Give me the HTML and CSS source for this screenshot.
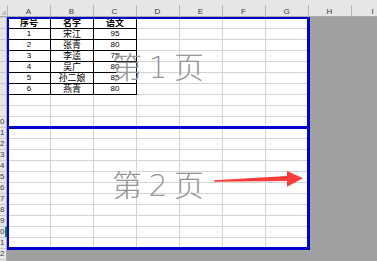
FILE: index.html
```html
<!DOCTYPE html>
<html lang="zh">
<head>
<meta charset="utf-8">
<title>分页预览</title>
<link rel="stylesheet" href="styles.css">
</head>
<body>
<div class="app">
  <div class="colhead">
    <div class="corner"><svg width="5" height="5" viewBox="0 0 5 5"><polygon points="5,0 5,5 0,5" fill="#bdbdbd"/></svg></div>
    <div class="ch">A</div>
    <div class="ch">B</div>
    <div class="ch">C</div>
    <div class="ch">D</div>
    <div class="ch">E</div>
    <div class="ch">F</div>
    <div class="ch">G</div>
    <div class="ch">H</div>
    <div class="ch">I</div>
  </div>
  <div class="main">
    <div class="rowhead">
      <div class="rh"></div>
      <div class="rh"></div>
      <div class="rh"></div>
      <div class="rh"></div>
      <div class="rh"></div>
      <div class="rh"></div>
      <div class="rh"></div>
      <div class="rh"></div>
      <div class="rh"></div>
      <div class="rh"><span>10</span></div>
      <div class="rh"><span>11</span></div>
      <div class="rh"><span>12</span></div>
      <div class="rh"><span>13</span></div>
      <div class="rh"><span>14</span></div>
      <div class="rh"><span>15</span></div>
      <div class="rh"><span>16</span></div>
      <div class="rh"><span>17</span></div>
      <div class="rh"><span>18</span></div>
      <div class="rh"><span>19</span></div>
      <div class="rh active"><span>20</span></div>
      <div class="rh"><span>21</span></div>
      <div class="rh"><span>22</span></div>
      <div class="rh"><span>23</span></div>
    </div>
    <div class="cells">
      <div class="print">
        <div class="table">
          <div class="zh h">序号</div><div class="zh h">名字</div><div class="zh h">语文</div>
          <div>1</div><div class="zh">宋江</div><div>95</div>
          <div>2</div><div class="zh">张青</div><div>80</div>
          <div>3</div><div class="zh">李逵</div><div>75</div>
          <div>4</div><div class="zh">吴广</div><div>80</div>
          <div>5</div><div class="zh">孙二娘</div><div>85</div>
          <div>6</div><div class="zh">燕青</div><div>80</div>
        </div>
      </div>
      <div class="pages">
        <div class="page p1"><span class="wm">第 1 页</span></div>
        <div class="page p2"><span class="wm">第 2 页</span></div>
      </div>
    </div>
  </div>
  <svg class="arrow" width="93" height="20" viewBox="0 0 93 20"><polygon points="2,11.3 75,7 75,2 91,9.3 75,17.7 75,12 2,12.7" fill="#fb3a3a"/></svg>
</div>
</body>
</html>
```
FILE: styles.css
```css
html, body {
  margin: 0;
  padding: 0;
}
body {
  width: 377px;
  height: 261px;
  overflow: hidden;
  background: #a0a0a0;
  font-family: "Liberation Sans", "Noto Sans CJK SC", sans-serif;
}
.app {
  position: relative;
  width: 377px;
  height: 261px;
  overflow: hidden;
  background: #a0a0a0;
}
.colhead {
  display: flex;
  height: 17px;
  box-sizing: border-box;
  background: #e6e6e6;
  border-bottom: 1px solid #ababab;
}
.corner {
  flex: none;
  width: 7px;
  box-sizing: border-box;
  display: flex;
  align-items: flex-end;
  justify-content: flex-end;
  padding: 0 1px 1px 0;
}
.corner svg {
  display: block;
}
.ch {
  flex: none;
  width: 43px;
  display: flex;
  align-items: flex-end;
  justify-content: center;
  font-size: 8px;
  line-height: 8px;
  color: #3b3b3b;
  background: linear-gradient(#b5b5b5, #b5b5b5) left 5px / 1px 11px no-repeat;
}
.main {
  display: flex;
}
.rowhead {
  flex: none;
  width: 7px;
  background: #e6e6e6;
}
.rh {
  height: 11px;
  box-sizing: border-box;
  border-top: 1px solid #c8c8c8;
  border-right: 1px solid #ababab;
  display: flex;
  justify-content: flex-end;
  align-items: center;
  padding-right: 1.5px;
  overflow: hidden;
  font-size: 8px;
  line-height: 10px;
  color: #444;
}
.rh.active {
  border-right: 2px solid #217346;
  padding-right: 0.5px;
}
.cells {
  position: relative;
  flex: none;
  width: 370px;
  height: 244px;
}
.print {
  width: 303px;
  height: 233px;
  background-color: #fff;
  background-image:
    repeating-linear-gradient(to right, #d4d4d4 0 1px, transparent 1px 43px),
    repeating-linear-gradient(to bottom, #d4d4d4 0 1px, transparent 1px 11px);
}
.table {
  display: grid;
  grid-template-columns: repeat(3, 43px);
  grid-auto-rows: 11px;
  width: max-content;
  border-right: 1px solid #000;
  border-bottom: 1px solid #000;
}
.table div {
  box-sizing: border-box;
  border-left: 1px solid #000;
  border-top: 1px solid #000;
  display: flex;
  align-items: center;
  justify-content: center;
  font-size: 8px;
  line-height: 10px;
  color: #000;
  white-space: nowrap;
}
.table .zh {
  font-size: 9px;
}
.table .h {
  font-weight: bold;
}
.pages {
  position: absolute;
  top: 0;
  left: 0;
  width: 303px;
  height: 233px;
  display: flex;
  flex-direction: column;
}
.page {
  box-sizing: border-box;
  border: solid #0000cc;
  border-width: 2px 3px 3px 2px;
  display: flex;
  align-items: center;
  justify-content: center;
}
.p1 {
  height: 112px;
  flex: none;
  padding-bottom: 10px;
}
.p2 {
  flex: 1;
  margin-top: -3px;
  border-top-width: 3px;
  padding-bottom: 4px;
}
.wm {
  font-family: "DejaVu Sans", "Noto Sans CJK SC", sans-serif;
  font-size: 30px;
  line-height: 30px;
  font-weight: 300;
  color: #959595;
  white-space: pre;
  word-spacing: -3px;
}
.arrow {
  position: absolute;
  left: 212px;
  top: 169px;
}
```
